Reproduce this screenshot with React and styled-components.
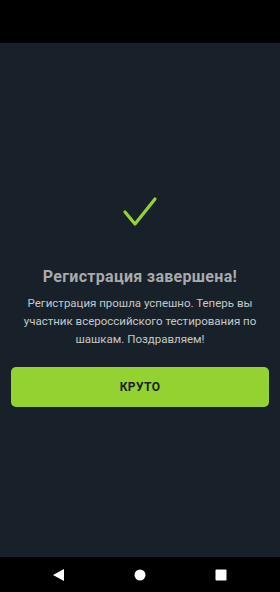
import React from 'react';
import styled, { createGlobalStyle } from 'styled-components';

const GlobalStyle = createGlobalStyle`
  html, body {
    margin: 0;
    padding: 0;
    background: #000;
  }
  * {
    box-sizing: border-box;
  }
`;

const Screen = styled.div`
  width: 280px;
  height: 592px;
  display: flex;
  flex-direction: column;
  font-family: Roboto, 'Noto Sans', sans-serif;
  background: #182129;
`;

const StatusBar = styled.div`
  height: 43px;
  background: #000;
`;

const Content = styled.main`
  flex: 1;
  display: flex;
  flex-direction: column;
  align-items: center;
  padding: 153px 11px 0;
`;

const Check = styled.svg`
  width: 36px;
  height: 34px;
`;

const Title = styled.h1`
  margin: 37px 0 0;
  font-size: 16px;
  line-height: 19px;
  font-weight: 700;
  color: #a8aaac;
  letter-spacing: 0.3px;
`;

const Message = styled.p`
  margin: 8px 0 0;
  font-size: 11.5px;
  line-height: 18px;
  color: #c6c8ca;
  text-align: center;
`;

const Button = styled.button`
  margin-top: 19px;
  width: 100%;
  height: 40px;
  border: none;
  border-radius: 5px;
  background: #94d232;
  color: #1c2127;
  font-family: inherit;
  font-size: 12px;
  font-weight: 700;
  letter-spacing: 0.4px;
  cursor: pointer;
`;

const NavBar = styled.nav`
  height: 35px;
  background: #000;
  display: flex;
  align-items: center;
  justify-content: space-between;
  padding: 0 53px;
`;

const NavIcon = styled.svg`
  width: 12px;
  height: 12px;
  fill: #fff;
`;

export default function App() {
  return (
    <Screen>
      <GlobalStyle />
      <StatusBar />
      <Content>
        <Check viewBox="0 0 36 34">
          <path
            d="M3 16 L13 28 L33 3"
            fill="none"
            stroke="#94d232"
            strokeWidth="3.2"
            strokeLinecap="round"
            strokeLinejoin="round"
          />
        </Check>
        <Title>Регистрация завершена!</Title>
        <Message>
          Регистрация прошла успешно. Теперь вы участник всероссийского тестирования по шашкам.
          Поздравляем!
        </Message>
        <Button>КРУТО</Button>
      </Content>
      <NavBar>
        <NavIcon viewBox="0 0 12 12">
          <path d="M11 0 L11 12 L0 6 Z" />
        </NavIcon>
        <NavIcon viewBox="0 0 12 12">
          <circle cx="6" cy="6" r="5.5" />
        </NavIcon>
        <NavIcon viewBox="0 0 12 12">
          <rect x="0.5" y="0.5" width="11" height="11" rx="1" />
        </NavIcon>
      </NavBar>
    </Screen>
  );
}
